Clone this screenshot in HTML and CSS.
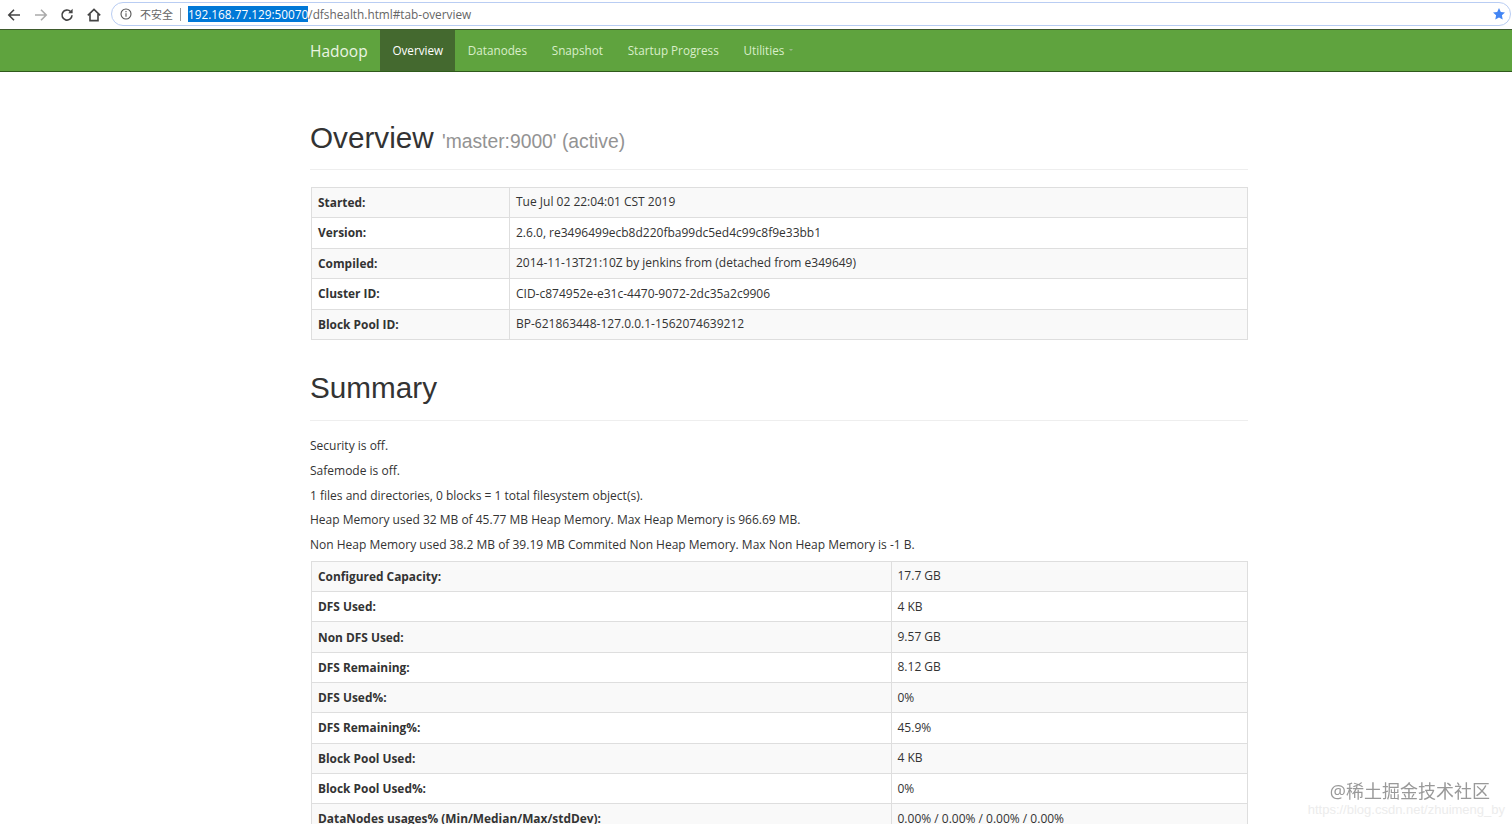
FILE: index.html
```html
<!DOCTYPE html>
<html lang="en">
<head>
<meta charset="utf-8">
<title>Namenode information</title>
<link rel="stylesheet" href="styles.css">
</head>
<body>
<header class="chrome">
  <div class="toolbtns">
    <svg class="tb" viewBox="0 0 16 16"><path d="M14 8H3M8 2.8 2.8 8 8 13.2" class="ic"/></svg>
    <svg class="tb dim" viewBox="0 0 16 16"><path d="M2 8h11M8 2.8 13.2 8 8 13.2" class="ic"/></svg>
    <svg class="tb" viewBox="0 0 16 16"><path d="M13 8.2A5 5 0 1 1 11.6 4.6" class="ic"/><path d="M13.6 1.8v4.4H9.2z" class="fl"/></svg>
    <svg class="tb" viewBox="0 0 16 16"><path d="M1.8 8.4 8 2.4l6.2 6M4 7v6.6h8V7" class="ic"/></svg>
  </div>
  <div class="omnibox">
    <svg class="info" viewBox="0 0 12 12"><circle cx="6" cy="6" r="5" class="thin"/><path d="M6 5.2v3.6M6 3v1.2" class="thin"/></svg>
    <span class="insecure">不安全</span>
    <span class="sep"></span>
    <span class="url"><span class="sel">192.168.77.129:50070</span>/dfshealth.html#tab-overview</span>
    <svg class="star" viewBox="0 0 14 14"><path d="M7 1l1.8 3.9 4.2.5-3.1 2.9.8 4.2L7 10.4l-3.7 2.1.8-4.2L1 5.4l4.2-.5z"/></svg>
  </div>
</header>
<nav class="navbar">
  <a class="brand">Hadoop</a>
  <a class="tab active">Overview</a>
  <a class="tab">Datanodes</a>
  <a class="tab">Snapshot</a>
  <a class="tab">Startup Progress</a>
  <a class="tab">Utilities<span class="caret"></span></a>
</nav>
<main class="container">
  <div class="page-header first">
    <h1>Overview <small>'master:9000' (active)</small></h1>
  </div>
  <table class="info-table narrow">
    <tr><th>Started:</th><td>Tue Jul 02 22:04:01 CST 2019</td></tr>
    <tr><th>Version:</th><td>2.6.0, re3496499ecb8d220fba99dc5ed4c99c8f9e33bb1</td></tr>
    <tr><th>Compiled:</th><td>2014-11-13T21:10Z by jenkins from (detached from e349649)</td></tr>
    <tr><th>Cluster ID:</th><td>CID-c874952e-e31c-4470-9072-2dc35a2c9906</td></tr>
    <tr><th>Block Pool ID:</th><td>BP-621863448-127.0.0.1-1562074639212</td></tr>
  </table>
  <div class="page-header">
    <h1>Summary</h1>
  </div>
  <div class="notes">
    <p>Security is off.</p>
    <p>Safemode is off.</p>
    <p>1 files and directories, 0 blocks = 1 total filesystem object(s).</p>
    <p>Heap Memory used 32 MB of 45.77 MB Heap Memory. Max Heap Memory is 966.69 MB.</p>
    <p>Non Heap Memory used 38.2 MB of 39.19 MB Commited Non Heap Memory. Max Non Heap Memory is -1 B.</p>
  </div>
  <table class="info-table wide">
    <tr><th>Configured Capacity:</th><td>17.7 GB</td></tr>
    <tr><th>DFS Used:</th><td>4 KB</td></tr>
    <tr><th>Non DFS Used:</th><td>9.57 GB</td></tr>
    <tr><th>DFS Remaining:</th><td>8.12 GB</td></tr>
    <tr><th>DFS Used%:</th><td>0%</td></tr>
    <tr><th>DFS Remaining%:</th><td>45.9%</td></tr>
    <tr><th>Block Pool Used:</th><td>4 KB</td></tr>
    <tr><th>Block Pool Used%:</th><td>0%</td></tr>
    <tr><th>DataNodes usages% (Min/Median/Max/stdDev):</th><td>0.00% / 0.00% / 0.00% / 0.00%</td></tr>
  </table>
</main>
<div class="watermark">
  <div class="wm-main">@稀土掘金技术社区</div>
  <div class="wm-sub">https://blog.csdn.net/zhuimeng_by</div>
</div>
</body>
</html>
```
FILE: styles.css
```css
html, body {
  margin: 0;
  height: 824px;
  overflow: hidden;
  background: #fff;
  color: #333;
  font-family: "Open Sans", "Noto Sans CJK SC", sans-serif;
  font-size: 12px;
}
.chrome {
  height: 29px;
  display: flex;
  align-items: center;
  background: #fff;
  box-sizing: border-box;
}
.toolbtns {
  display: flex;
  gap: 10.5px;
  padding-left: 6px;
  width: 105px;
  box-sizing: border-box;
  flex: none;
}
.tb { width: 16px; height: 16px; }
.ic { fill: none; stroke: #444; stroke-width: 1.6; }
.dim .ic { stroke: #aaa; }
.fl { fill: #444; }
.omnibox {
  flex: none;
  margin-left: 6px;
  margin-top: -1px;
  width: 1400px;
  height: 24px;
  box-sizing: border-box;
  border: 1.5px solid #b9cdf3;
  border-radius: 12px;
  display: flex;
  align-items: center;
  padding-left: 8px;
  padding-right: 4px;
}
.info { width: 12px; height: 12px; flex: none; }
.thin { fill: none; stroke: #555; stroke-width: 1.1; }
.insecure { margin-left: 8px; font-size: 11px; color: #666; }
.sep { width: 1px; height: 13px; background: #999; margin: 0 7px; }
.url { color: #666; font-size: 11.8px; flex: 1; white-space: nowrap; }
.sel { background: #0078d7; color: #fff; }
.star { width: 14px; height: 14px; fill: #4285f4; flex: none; }
.navbar {
  height: 43px;
  box-sizing: border-box;
  background: #5fa33e;
  border-top: 1px solid #3e5a2c;
  border-bottom: 1px solid #2f5a1c;
  display: flex;
  align-items: stretch;
  padding-left: 310px;
  color: #d9eec9;
  font-size: 11.7px;
}
.brand {
  font-size: 15.5px;
  color: #eaf5e2;
  width: 70px;
  display: flex;
  align-items: center;
}
.tab {
  display: flex;
  align-items: center;
  padding: 0 12.4px 1px;
}
.tab.active { background: #44692f; color: #fff; }
.caret {
  display: inline-block;
  margin-left: 5px;
  border-top: 2px solid #9cb98b;
  border-left: 2px solid transparent;
  border-right: 2px solid transparent;
}
.container { width: 938px; margin-left: 310px; }
.page-header { border-bottom: 1px solid #eee; padding-bottom: 16px; margin-bottom: 17px; }
.page-header.first { margin-top: 33px; padding-bottom: 15px; margin-bottom: 16.5px; }
h1 { font: 500 29.7px/33px "Liberation Sans", sans-serif; margin: 0; padding-top: 16px; color: #333; }
h1 small { font-size: 19.3px; font-weight: 400; color: #939393; line-height: 1; }
.info-table {
  border-collapse: collapse;
  width: 937px;
  margin-left: 1px;
  table-layout: fixed;
  margin-bottom: 15px;
}
.info-table tr { height: 30.5px; }
.info-table.wide tr { height: 30.3px; }
.info-table tr:nth-child(odd) { background: #f9f9f9; }
.info-table th, .info-table td {
  border: 1px solid #dedede;
  padding: 0 6px 1px;
  text-align: left;
  white-space: nowrap;
  box-sizing: border-box;
}
.info-table th { font-weight: 700; font-size: 11.9px; }
.narrow th { width: 198px; }
.wide th { width: 579.5px; }
.notes { margin-bottom: -1.2px; }
.notes p { margin: 0; height: 24.8px; line-height: 16px; }
.watermark { position: absolute; right: 7px; top: 779px; text-align: right; }
.wm-main { font-size: 18px; color: #999; line-height: 24px; margin-right: 15px; filter: blur(0.4px); }
.wm-sub { font-size: 13px; color: #ececec; line-height: 14px; font-family: "Liberation Sans", sans-serif; }
```
